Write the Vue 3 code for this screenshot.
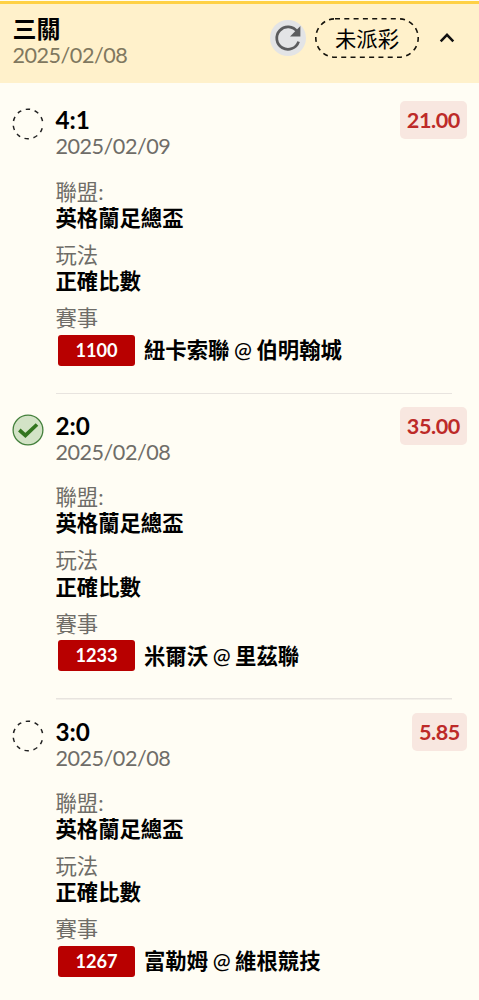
<script setup>
import { ref } from 'vue'

const expanded = ref(true)

const ticket = {
  title: '三關',
  date: '2025/02/08',
  status: '未派彩',
}

const legs = [
  { score: '4:1', date: '2025/02/09', odds: '21.00', won: false, league: '英格蘭足總盃', play: '正確比數', code: '1100', away: '紐卡索聯', home: '伯明翰城' },
  { score: '2:0', date: '2025/02/08', odds: '35.00', won: true, league: '英格蘭足總盃', play: '正確比數', code: '1233', away: '米爾沃', home: '里茲聯' },
  { score: '3:0', date: '2025/02/08', odds: '5.85', won: false, league: '英格蘭足總盃', play: '正確比數', code: '1267', away: '富勒姆', home: '維根競技' },
]
</script>

<template>
  <div class="ticket">
    <header class="ticket-header">
      <div class="ticket-name">
        <div class="ticket-title">{{ ticket.title }}</div>
        <div class="date">{{ ticket.date }}</div>
      </div>
      <div class="actions">
        <button class="refresh" aria-label="refresh">
          <svg viewBox="0 0 36 36" width="36" height="36">
            <path d="M27.2 11.8 A11.2 11.2 0 1 0 28.6 21.6" fill="none" stroke="#5b5c5e" stroke-width="2.7" />
            <path d="M30.4 6 V16.4 H20 Z" fill="#5b5c5e" />
          </svg>
        </button>
        <div class="status">
          <svg class="status-outline" viewBox="0 0 106 42" width="106" height="42">
            <rect x="1.8" y="1.8" width="102.4" height="38.4" rx="19.2" fill="none" stroke="#15130c" stroke-width="1.6" stroke-dasharray="5 4.3" />
          </svg>
          <span>{{ ticket.status }}</span>
        </div>
        <button class="toggle" aria-label="toggle" @click="expanded = !expanded">
          <svg viewBox="0 0 16 12" width="16" height="12">
            <path d="M1.7 9.3 L8 2.8 L14.3 9.3" fill="none" stroke="#111" stroke-width="2.5" />
          </svg>
        </button>
      </div>
    </header>

    <main v-if="expanded" class="legs">
      <section v-for="leg in legs" :key="leg.code" class="leg">
        <svg class="leg-icon" viewBox="0 0 32 32" width="32" height="32">
          <template v-if="leg.won">
            <circle cx="16" cy="16" r="14.9" fill="#d3e3c6" stroke="#44803c" stroke-width="1.3" />
            <path d="M7.3 16 L13.4 21.4 L25 10.5" fill="none" stroke="#33751f" stroke-width="3.7" />
          </template>
          <path v-else d="M30.19 20.2 A14.8 14.8 0 1 1 30.5 13.05" pathLength="332" fill="none" stroke="#222" stroke-width="1.5" stroke-dasharray="17 18" />
        </svg>
        <div class="leg-body">
          <div class="leg-top">
            <div>
              <div class="score">{{ leg.score }}</div>
              <div class="date">{{ leg.date }}</div>
            </div>
            <div class="odds">{{ leg.odds }}</div>
          </div>
          <dl class="fields">
            <div class="field">
              <dt>聯盟:</dt>
              <dd>{{ leg.league }}</dd>
            </div>
            <div class="field">
              <dt>玩法</dt>
              <dd>{{ leg.play }}</dd>
            </div>
            <div class="field">
              <dt>賽事</dt>
              <dd class="match">
                <span class="code">{{ leg.code }}</span>
                <span class="teams">{{ leg.away }} <span class="at">@</span> {{ leg.home }}</span>
              </dd>
            </div>
          </dl>
        </div>
      </section>
    </main>
  </div>
</template>

<style>
body {
  background: #fffdf4;
}
</style>

<style scoped>
.ticket {
  box-sizing: border-box;
  height: 1000px;
  overflow: hidden;
  padding-top: 1px;
  background: #fffdf4;
  color: #000;
  font-family: Lato, "Noto Sans CJK TC", sans-serif;
  font-size: 21.35px;
}

.ticket-header {
  display: flex;
  justify-content: space-between;
  box-sizing: border-box;
  height: 82px;
  padding: 13px 24px 0 12.5px;
  border-top: 3px solid #ffd145;
  background: #fff1cb;
}

.ticket-title {
  margin-top: -1px;
  font-size: 24px;
  font-weight: 700;
  line-height: 26px;
}

.date {
  color: #6f6d68;
  font-size: 21.6px;
  letter-spacing: -0.5px;
  line-height: 26px;
}

.ticket-header .date {
  color: #80785f;
}

.actions {
  display: flex;
  align-items: center;
  height: 42px;
}

button {
  padding: 0;
  border: 0;
  background: none;
}

.refresh {
  width: 36px;
  height: 36px;
  border-radius: 50%;
  background: #e3e4e6;
}

.refresh svg,
.toggle svg {
  display: block;
}

.status {
  position: relative;
  width: 106px;
  height: 42px;
  margin-left: 8px;
  line-height: 44px;
  text-align: center;
}

.status-outline {
  position: absolute;
  inset: 0;
}

.toggle {
  margin-left: 19px;
}

.legs {
  padding: 5.5px 12.5px 0 11.5px;
}

.leg {
  display: flex;
  gap: 12px;
  height: 305.7px;
}

.leg-icon {
  flex: none;
  margin-top: 19.7px;
}

.leg-body {
  flex: 1;
}

.leg:not(:last-child) .leg-body {
  background: linear-gradient(#e8e4df, #e8e4df) 0 100% / 396px 1.5px no-repeat;
}

.leg-top {
  display: flex;
  justify-content: space-between;
  height: 90px;
}

.score {
  margin-top: 17.7px;
  font-size: 24.3px;
  font-weight: 700;
  line-height: 27px;
}

.odds {
  height: 38px;
  margin-top: 12.7px;
  padding: 0 6.5px;
  border-radius: 5px;
  background: #f8e7e0;
  color: #bd2a28;
  font-size: 21.6px;
  font-weight: 700;
  letter-spacing: -0.4px;
  line-height: 39px;
}

.fields {
  margin: 0;
}

.field {
  height: 63.2px;
  line-height: 26.3px;
}

dt {
  color: #6f6d68;
}

dd {
  margin: 0;
  font-weight: 700;
}

.match {
  display: flex;
  align-items: center;
  gap: 9px;
  height: 31px;
  margin-top: 3.4px;
  padding-left: 2.5px;
}

.teams {
  word-spacing: -0.6px;
}

.at {
  font-weight: 500;
}

.code {
  width: 77px;
  height: 31px;
  border-radius: 3px;
  background: #b80000;
  color: #fff;
  font-size: 18.2px;
  font-weight: 700;
  line-height: 31px;
  text-align: center;
}
</style>
